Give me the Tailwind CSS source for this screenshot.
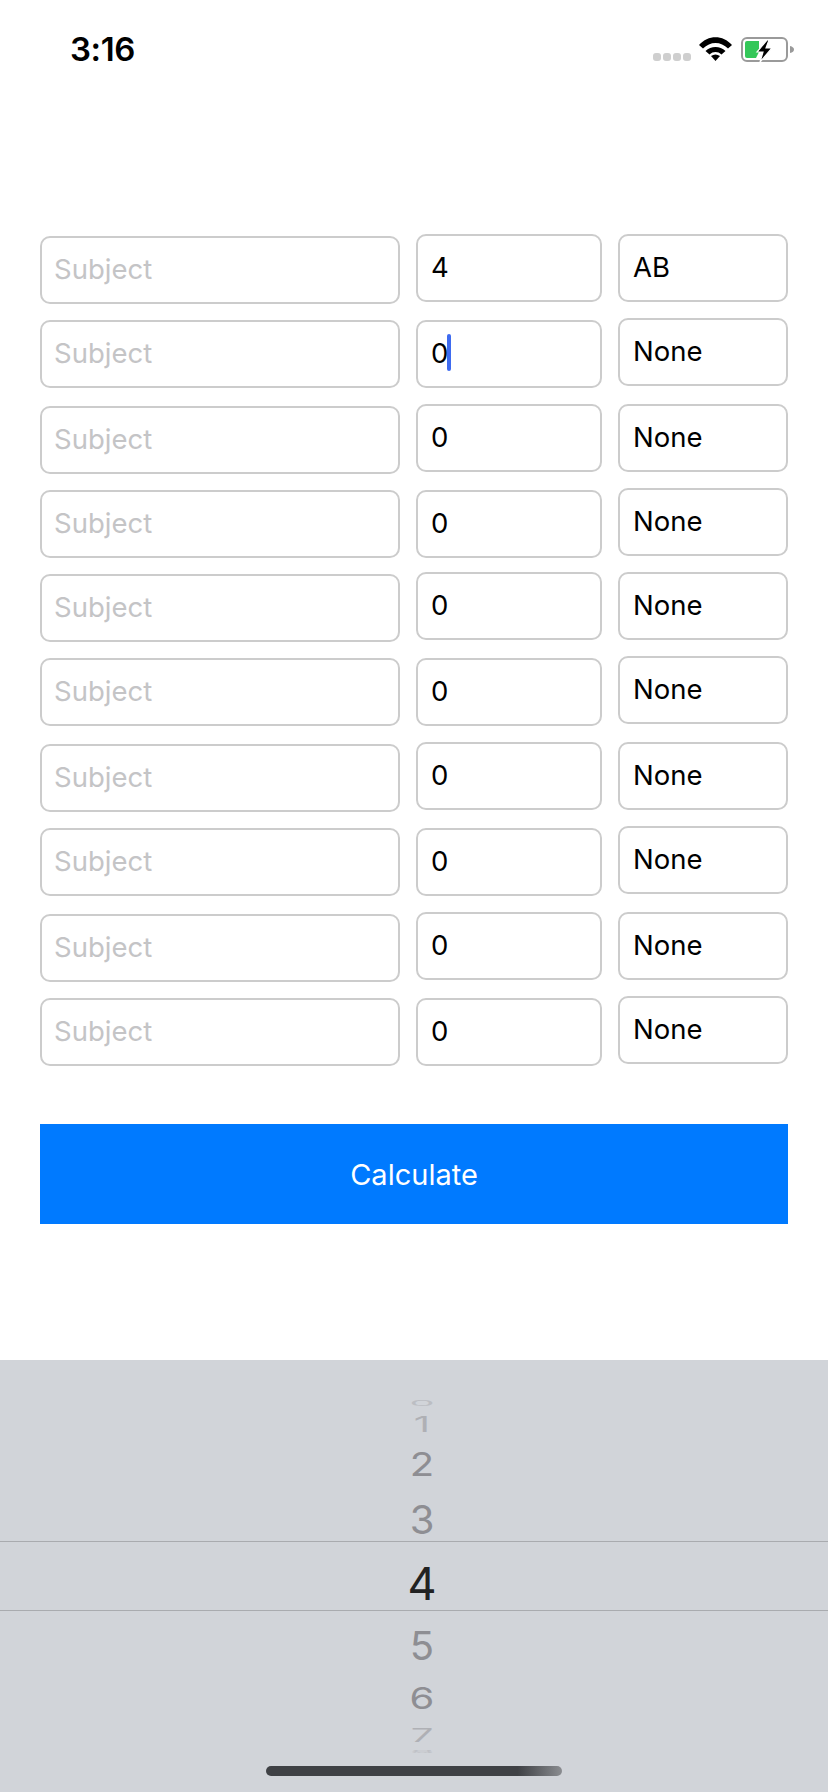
<!DOCTYPE html>
<html lang="en">
<head>
  <meta charset="UTF-8" />
  <title>GPA Calculator</title>
  <script src="https://cdn.jsdelivr.net/npm/@tailwindcss/browser@4"></script>
</head>
<body class="bg-white text-black font-['Inter',sans-serif] w-[828px] h-[1792px] overflow-hidden relative">

  <!-- Status bar -->
  <div class="h-[234px] relative">
    <span class="absolute left-[70px] top-[29px] text-[33px] leading-[40px] font-semibold tracking-[-0.4px]">3:16</span>
    <div class="absolute left-[653px] top-[53px] flex gap-[2px]">
      <span class="w-[8px] h-[8px] rounded-[3px] bg-[#cfcfcf]"></span>
      <span class="w-[8px] h-[8px] rounded-[3px] bg-[#cfcfcf]"></span>
      <span class="w-[8px] h-[8px] rounded-[3px] bg-[#cfcfcf]"></span>
      <span class="w-[8px] h-[8px] rounded-[3px] bg-[#cfcfcf]"></span>
    </div>
    <svg class="absolute left-[699px] top-[37px]" width="33" height="24" viewBox="0 0 33 24">
      <path d="M0 8 C9 -2.500 24 -2.500 33 8 L29 11.500 C22 4 11 4 4 11.500 Z" fill="#000"/>
      <path d="M6.500 14 C12 8.500 21 8.500 26.500 14 L22.500 17.500 C19 14.200 14 14.200 10.500 17.500 Z" fill="#000"/>
      <path d="M12 19 C15 17 18 17 21 19 L16.500 24 Z" fill="#000"/>
    </svg>
    <svg class="absolute left-[740px] top-[35px]" width="56" height="28" viewBox="0 0 56 28">
      <rect x="2" y="3" width="45" height="23" rx="5" fill="none" stroke="#9a9a9a" stroke-width="2"/>
      <path d="M5 8 Q5 6 7 6 H19 V17 L16 23 H7 Q5 23 5 21 Z" fill="#34c759"/>
      <path d="M27 5 L17 17 H23 L20 27 L32 13 H26 L29 5 Z" fill="#000" stroke="#fff" stroke-width="1.200"/>
      <path d="M50 11 Q54 12 54 14.500 Q54 17 50 18 Z" fill="#9a9a9a"/>
    </svg>
  </div>

  <!-- Grade rows -->
  <div class="px-[40px] flex flex-col">
    <div class="flex gap-[16px] items-start h-[84px]">
      <input placeholder="Subject" class="mt-[2px] w-[360px] h-[68px] border-2 border-[#cccccc] rounded-[10px] pl-[12px] pb-[2px] text-[27.5px] placeholder:text-[#c4c4c6] outline-none" />
      <div class="w-[186px] h-[68px] border-2 border-[#cccccc] rounded-[10px] pl-[13px] text-[27.5px] flex items-center">4</div>
      <div class="w-[170px] h-[68px] border-2 border-[#cccccc] rounded-[10px] pl-[13px] text-[27.5px] flex items-center">AB</div>
    </div>
    <div class="flex gap-[16px] items-start h-[86px]">
      <input placeholder="Subject" class="mt-[2px] w-[360px] h-[68px] border-2 border-[#cccccc] rounded-[10px] pl-[12px] pb-[2px] text-[27.5px] placeholder:text-[#c4c4c6] outline-none" />
      <div class="mt-[2px] w-[186px] h-[68px] border-2 border-[#cccccc] rounded-[10px] pl-[13px] text-[27.5px] flex items-center">0<span class="w-[4px] h-[37px] rounded-full bg-[#3e6bf0] -ml-[1px] -mt-[3px]"></span></div>
      <div class="w-[170px] h-[68px] border-2 border-[#cccccc] rounded-[10px] pl-[13px] text-[27.5px] flex items-center">None</div>
    </div>
    <div class="flex gap-[16px] items-start h-[84px]">
      <input placeholder="Subject" class="mt-[2px] w-[360px] h-[68px] border-2 border-[#cccccc] rounded-[10px] pl-[12px] pb-[2px] text-[27.5px] placeholder:text-[#c4c4c6] outline-none" />
      <div class="w-[186px] h-[68px] border-2 border-[#cccccc] rounded-[10px] pl-[13px] text-[27.5px] flex items-center">0</div>
      <div class="w-[170px] h-[68px] border-2 border-[#cccccc] rounded-[10px] pl-[13px] text-[27.5px] flex items-center">None</div>
    </div>
    <div class="flex gap-[16px] items-start h-[84px]">
      <input placeholder="Subject" class="mt-[2px] w-[360px] h-[68px] border-2 border-[#cccccc] rounded-[10px] pl-[12px] pb-[2px] text-[27.5px] placeholder:text-[#c4c4c6] outline-none" />
      <div class="mt-[2px] w-[186px] h-[68px] border-2 border-[#cccccc] rounded-[10px] pl-[13px] text-[27.5px] flex items-center">0</div>
      <div class="w-[170px] h-[68px] border-2 border-[#cccccc] rounded-[10px] pl-[13px] text-[27.5px] flex items-center">None</div>
    </div>
    <div class="flex gap-[16px] items-start h-[84px]">
      <input placeholder="Subject" class="mt-[2px] w-[360px] h-[68px] border-2 border-[#cccccc] rounded-[10px] pl-[12px] pb-[2px] text-[27.5px] placeholder:text-[#c4c4c6] outline-none" />
      <div class="w-[186px] h-[68px] border-2 border-[#cccccc] rounded-[10px] pl-[13px] text-[27.5px] flex items-center">0</div>
      <div class="w-[170px] h-[68px] border-2 border-[#cccccc] rounded-[10px] pl-[13px] text-[27.5px] flex items-center">None</div>
    </div>
    <div class="flex gap-[16px] items-start h-[86px]">
      <input placeholder="Subject" class="mt-[2px] w-[360px] h-[68px] border-2 border-[#cccccc] rounded-[10px] pl-[12px] pb-[2px] text-[27.5px] placeholder:text-[#c4c4c6] outline-none" />
      <div class="mt-[2px] w-[186px] h-[68px] border-2 border-[#cccccc] rounded-[10px] pl-[13px] text-[27.5px] flex items-center">0</div>
      <div class="w-[170px] h-[68px] border-2 border-[#cccccc] rounded-[10px] pl-[13px] text-[27.5px] flex items-center">None</div>
    </div>
    <div class="flex gap-[16px] items-start h-[84px]">
      <input placeholder="Subject" class="mt-[2px] w-[360px] h-[68px] border-2 border-[#cccccc] rounded-[10px] pl-[12px] pb-[2px] text-[27.5px] placeholder:text-[#c4c4c6] outline-none" />
      <div class="w-[186px] h-[68px] border-2 border-[#cccccc] rounded-[10px] pl-[13px] text-[27.5px] flex items-center">0</div>
      <div class="w-[170px] h-[68px] border-2 border-[#cccccc] rounded-[10px] pl-[13px] text-[27.5px] flex items-center">None</div>
    </div>
    <div class="flex gap-[16px] items-start h-[86px]">
      <input placeholder="Subject" class="mt-[2px] w-[360px] h-[68px] border-2 border-[#cccccc] rounded-[10px] pl-[12px] pb-[2px] text-[27.5px] placeholder:text-[#c4c4c6] outline-none" />
      <div class="mt-[2px] w-[186px] h-[68px] border-2 border-[#cccccc] rounded-[10px] pl-[13px] text-[27.5px] flex items-center">0</div>
      <div class="w-[170px] h-[68px] border-2 border-[#cccccc] rounded-[10px] pl-[13px] text-[27.5px] flex items-center">None</div>
    </div>
    <div class="flex gap-[16px] items-start h-[84px]">
      <input placeholder="Subject" class="mt-[2px] w-[360px] h-[68px] border-2 border-[#cccccc] rounded-[10px] pl-[12px] pb-[2px] text-[27.5px] placeholder:text-[#c4c4c6] outline-none" />
      <div class="w-[186px] h-[68px] border-2 border-[#cccccc] rounded-[10px] pl-[13px] text-[27.5px] flex items-center">0</div>
      <div class="w-[170px] h-[68px] border-2 border-[#cccccc] rounded-[10px] pl-[13px] text-[27.5px] flex items-center">None</div>
    </div>
    <div class="flex gap-[16px] items-start h-[70px]">
      <input placeholder="Subject" class="mt-[2px] w-[360px] h-[68px] border-2 border-[#cccccc] rounded-[10px] pl-[12px] pb-[2px] text-[27.5px] placeholder:text-[#c4c4c6] outline-none" />
      <div class="mt-[2px] w-[186px] h-[68px] border-2 border-[#cccccc] rounded-[10px] pl-[13px] text-[27.5px] flex items-center">0</div>
      <div class="w-[170px] h-[68px] border-2 border-[#cccccc] rounded-[10px] pl-[13px] text-[27.5px] flex items-center">None</div>
    </div>

    <button class="mt-[58px] w-[748px] h-[100px] pt-[1px] bg-[#007aff] text-white text-[29px]">Calculate</button>
  </div>

  <!-- Number picker -->
  <div class="absolute left-0 right-0 bottom-0 h-[432px] bg-[#d1d4d9]">
    <div class="absolute left-0 right-0 top-[181px] h-[70px] border-y border-[#a9abaf]"></div>
    <div class="absolute left-[402px] w-[40px] top-0 h-full text-center text-[#8e8e93]">
      <div class="absolute w-full top-[23px] text-[40px] leading-[40px] scale-y-[0.2] opacity-30">0</div>
      <div class="absolute w-full top-[44.5px] text-[40px] leading-[40px] scale-y-[0.52] opacity-50">1</div>
      <div class="absolute w-full top-[85px] text-[40px] leading-[40px] scale-y-[0.82]">2</div>
      <div class="absolute w-full top-[140px] text-[40px] leading-[40px]">3</div>
      <div class="absolute w-full top-[198.5px] text-[45px] leading-[50px] text-[#222222]">4</div>
      <div class="absolute w-full top-[265.5px] text-[40px] leading-[40px]">5</div>
      <div class="absolute w-full top-[318px] text-[40px] leading-[40px] scale-y-[0.75]">6</div>
      <div class="absolute w-full top-[355px] text-[40px] leading-[40px] scale-y-[0.48] opacity-50">7</div>
      <div class="absolute w-full top-[371.5px] text-[40px] leading-[40px] scale-y-[0.1] opacity-30">8</div>
    </div>
    <div class="absolute left-[266px] top-[406px] w-[296px] h-[10px] rounded-full bg-gradient-to-r from-[#3f4145] from-85% to-[#8b8d91]"></div>
  </div>
</body>
</html>
